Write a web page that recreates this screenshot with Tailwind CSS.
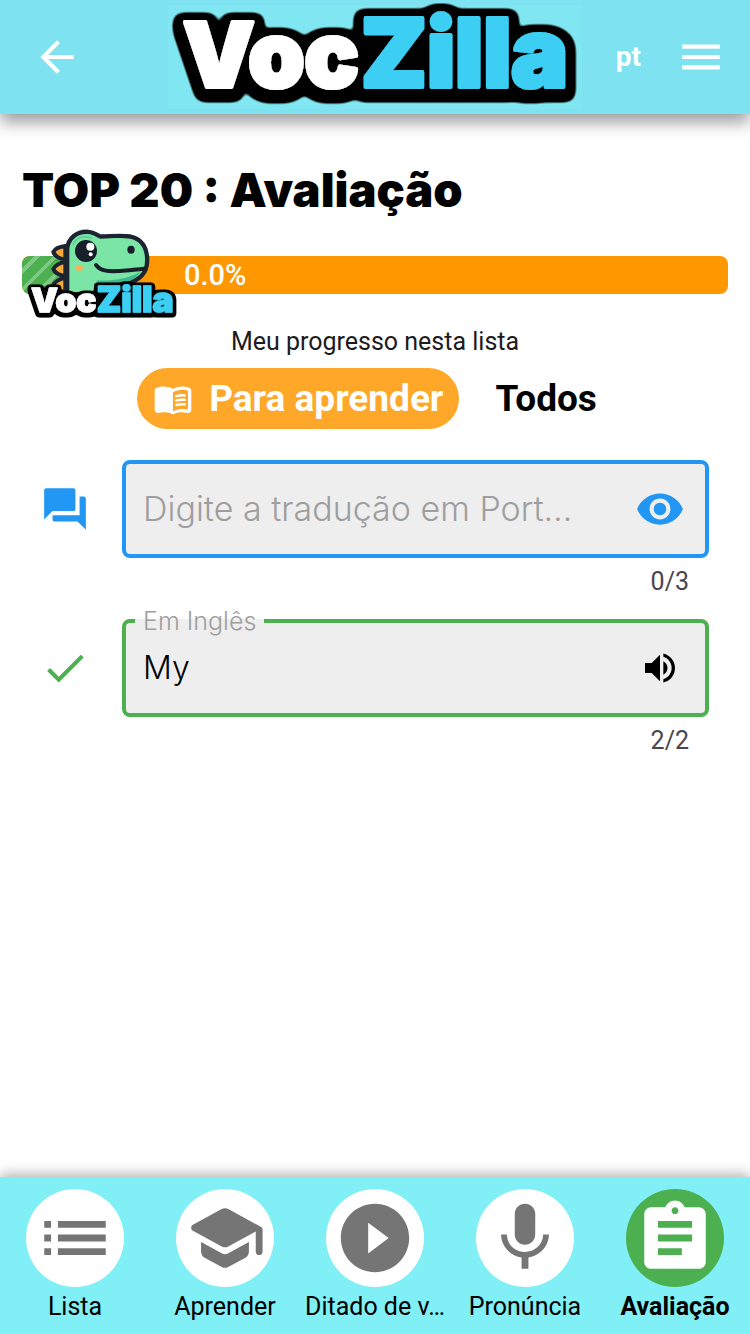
<!DOCTYPE html>
<html lang="pt">
<head>
<meta charset="utf-8">
<meta name="viewport" content="width=device-width, initial-scale=1">
<title>VocZilla</title>
<script src="https://cdn.jsdelivr.net/npm/@tailwindcss/browser@4"></script>
</head>
<body class="flex min-h-screen flex-col bg-white font-['Roboto',sans-serif] text-black">

<header class="relative grid h-[114px] grid-cols-[1fr_414px_1fr] items-center bg-[#7ee2f0] shadow-[0_8px_16px_rgba(0,0,0,0.4)]">
  <button type="button" aria-label="Voltar" class="flex w-[114px] justify-center text-white">
    <svg class="size-[50px]" viewBox="0 0 24 24" fill="currentColor"><path d="M20 11H7.830l5.590-5.590L12 4l-8 8 8 8 1.410-1.410L7.830 13H20v-2z"/></svg>
  </button>
  <a href="#" aria-label="VocZilla" class="block bg-[#80e6f1]">
    <svg class="block h-[104px] w-full overflow-visible" viewBox="168 5 414 104" font-family="Inter, sans-serif" font-weight="900" stroke-linejoin="round" stroke-width="4">
      <defs>
        <!-- Rounded black outline around the lettering, slightly deeper at the bottom -->
        <filter id="outline" filterUnits="userSpaceOnUse" x="160" y="0" width="430" height="114">
          <feMorphology in="SourceAlpha" operator="dilate" radius="5"/>
          <feGaussianBlur stdDeviation="4"/>
          <feOffset dy="3"/>
          <feComponentTransfer result="edge"><feFuncA type="linear" slope="12" intercept="-0.6"/></feComponentTransfer>
          <feFlood flood-color="#000"/><feComposite in2="edge" operator="in"/>
          <feMerge><feMergeNode/><feMergeNode in="SourceGraphic"/></feMerge>
        </filter>
      </defs>
      <g filter="url(#outline)">
        <text x="183" y="87" font-size="90" fill="#fff" stroke="#fff">Voc</text>
        <text x="361" y="87" font-size="95" fill="#3ccff3" stroke="#3ccff3">Zilla</text>
      </g>
    </svg>
  </a>
  <div class="flex items-center justify-end gap-[35px] pr-6 text-white">
    <button type="button" class="text-[28px] leading-8 font-bold">pt</button>
    <button type="button" aria-label="Menu">
      <svg class="block size-[50px]" viewBox="0 0 24 24" fill="currentColor"><path d="M3 18h18v-2H3v2zm0-5h18v-2H3v2zm0-7v2h18V6H3z"/></svg>
    </button>
  </div>
</header>

<main class="flex grow flex-col px-[22px] pt-12">
  <h1 class="font-['Inter',sans-serif] text-[47px] leading-14 font-black">TOP 20 : Avaliação</h1>

  <div class="relative mt-[38px] flex h-[38px] items-center rounded-lg bg-[#ff9800]" role="progressbar" aria-label="Meu progresso nesta lista" aria-valuenow="0" aria-valuemin="0" aria-valuemax="100">
    <div class="h-full w-[100px] rounded-l-lg bg-[repeating-linear-gradient(135deg,#4caf50_0px,#4caf50_9px,#81c784_9px,#81c784_13px)]"></div>
    <span class="ml-[62px] text-[29px] leading-8 font-medium text-white">0.0%</span>
    <svg class="absolute top-[-28px] left-0 h-[92px] w-[160px] overflow-visible" viewBox="36 24 480 276" stroke-linejoin="round" stroke-linecap="round">
      <defs>
        <filter id="outline-small" filterUnits="userSpaceOnUse" x="30" y="170" width="500" height="140">
          <feMorphology in="SourceAlpha" operator="dilate" radius="6"/>
          <feGaussianBlur stdDeviation="4"/>
          <feOffset dy="4"/>
          <feComponentTransfer result="edge"><feFuncA type="linear" slope="8" intercept="-0.4"/></feComponentTransfer>
          <feFlood flood-color="#000"/><feComposite in2="edge" operator="in"/>
          <feMerge><feMergeNode/><feMergeNode in="SourceGraphic"/></feMerge>
        </filter>
      </defs>
      <g fill="#f9a93a" stroke="#1b2430" stroke-width="12">
        <path d="M166 78C148 80 134 88 130 96C134 108 148 116 166 118Z"/>
        <path d="M166 126C148 128 134 138 130 147C134 158 148 166 166 168Z"/>
        <path d="M166 174C148 176 134 186 130 196C134 206 148 214 166 216Z"/>
      </g>
      <path d="M178 216V88C180 58 204 40 234 42C254 44 260 54 272 56C300 56 330 52 360 56C392 62 406 88 405 122C405 158 382 176 345 186C310 192 280 190 254 190L250 216Z" fill="#7ae5a4" stroke="#1b2430" stroke-width="26" paint-order="stroke"/>
      <path d="M262 181C300 184 350 178 390 156C380 178 350 190 310 190L258 190Z" fill="#3fb88f"/>
      <path d="M190 74C196 52 222 46 244 54" fill="none" stroke="#5fcf96" stroke-width="5"/>
      <circle cx="228" cy="93" r="33" fill="#171f2a"/>
      <circle cx="241" cy="80" r="12" fill="#fff"/><circle cx="242" cy="103" r="6" fill="#fff"/>
      <ellipse cx="208" cy="144" rx="13" ry="8" fill="#f8b25c"/>
      <ellipse cx="363" cy="89" rx="11" ry="12" fill="#171f2a"/>
      <path d="M258 135C274 156 300 154 330 153C356 152 376 148 402 146" fill="none" stroke="#171f2a" stroke-width="12"/>
      <g filter="url(#outline-small)" font-family="Inter, sans-serif" font-weight="900" stroke-width="4">
        <text x="64" y="277" font-size="100" fill="#fff" stroke="#fff">Voc</text>
        <text x="260" y="277" font-size="106" fill="#3ccff3" stroke="#3ccff3">Zilla</text>
      </g>
    </svg>
  </div>

  <p class="mt-8 text-center text-[25px] leading-8 text-[#1d1b20]">Meu progresso nesta lista</p>

  <div class="mt-[10px] flex justify-center gap-5 text-[37px] leading-[61px] font-bold">
    <button type="button" class="flex items-center gap-4 rounded-full bg-[#ffa728] px-4 text-white">
      <svg class="size-[40px]" viewBox="0 0 24 24" fill="currentColor"><path d="M17.500 4.500c-1.950 0-4.050.4-5.500 1.500-1.450-1.100-3.550-1.500-5.500-1.500-1.450 0-2.990.22-4.280.79C1.490 5.620 1 6.330 1 7.140v11.280c0 1.300 1.220 2.260 2.480 1.940.98-.25 2.020-.36 3.020-.36 1.560 0 3.220.26 4.560.92.6.3 1.280.3 1.870 0 1.340-.67 3-.92 4.560-.92 1 0 2.040.11 3.020.36 1.260.33 2.480-.63 2.480-1.940V7.140c0-.81-.49-1.520-1.220-1.850-1.280-.57-2.820-.79-4.270-.79zM21 17.230c0 .63-.58 1.090-1.200.98-.75-.14-1.530-.2-2.300-.2-1.700 0-4.150.65-5.500 1.500V8c1.350-.85 3.800-1.500 5.500-1.500.92 0 1.830.09 2.700.28.46.1.8.51.8.98v9.470z"/><path d="M13.980 11.010c-.32 0-.61-.2-.71-.52-.13-.39.09-.82.48-.94 1.540-.5 3.530-.66 5.360-.45.41.05.71.42.66.83-.05.41-.42.71-.83.66-1.620-.19-3.390-.04-4.730.39-.08.01-.16.03-.23.03zM13.980 13.670c-.32 0-.61-.2-.71-.52-.13-.39.09-.82.48-.94 1.530-.5 3.530-.66 5.360-.45.41.05.71.42.66.83-.05.41-.42.71-.83.66-1.620-.19-3.390-.04-4.730.39-.08.02-.16.03-.23.03zM13.980 16.330c-.32 0-.61-.2-.71-.52-.13-.39.09-.82.48-.94 1.530-.5 3.530-.66 5.360-.45.41.05.71.42.66.83-.05.41-.42.7-.83.66-1.620-.19-3.390-.04-4.730.39-.08.02-.16.03-.23.03z"/></svg>
      Para aprender
    </button>
    <button type="button" class="px-4">Todos</button>
  </div>

  <form class="mt-[31px] grid grid-cols-[86px_minmax(0,1fr)] gap-x-[14px] pr-[19px]">
    <div class="flex h-[98px] items-center justify-center text-[#2196f3]">
      <svg class="size-[50px]" viewBox="0 0 24 24" fill="currentColor"><path d="M21 6h-2v9H6v2c0 .55.45 1 1 1h11l4 4V7c0-.55-.45-1-1-1zm-4 6V3c0-.55-.45-1-1-1H3c-.55 0-1 .45-1 1v14l4-4h10c.55 0 1-.45 1-1z"/></svg>
    </div>
    <div>
      <div class="flex h-[98px] items-center rounded-lg border-4 border-[#2196f3] bg-[#eeeeee] pr-5 pl-[17px]">
        <input type="text" maxlength="3" aria-label="Digite a tradução em Português" placeholder="Digite a tradução em Port…" class="w-full min-w-0 bg-transparent font-['Inter',sans-serif] text-[34px] leading-10 font-light text-ellipsis outline-none placeholder:text-[#9e9e9e]">
        <button type="button" aria-label="Mostrar resposta" class="shrink-0 text-[#2196f3]">
          <svg class="block size-[50px]" viewBox="0 0 24 24" fill="currentColor"><path d="M12 4.500C7 4.500 2.730 7.610 1 12c1.730 4.390 6 7.500 11 7.500s9.270-3.110 11-7.500c-1.730-4.390-6-7.500-11-7.500zM12 17c-2.760 0-5-2.240-5-5s2.240-5 5-5 5 2.240 5 5-2.240 5-5 5zm0-8c-1.660 0-3 1.340-3 3s1.340 3 3 3 3-1.340 3-3-1.340-3-3-3z"/></svg>
        </button>
      </div>
      <p class="mt-2 pr-5 text-right text-[25px] leading-8 text-[#49454f]">0/3</p>
    </div>

    <div class="mt-[21px] flex h-[98px] items-center justify-center text-[#4caf50]">
      <svg class="size-[50px]" viewBox="0 0 24 24" fill="currentColor"><path d="M9 16.170 4.830 12l-1.420 1.410L9 19 21 7l-1.410-1.410z"/></svg>
    </div>
    <div class="mt-[9px]">
      <fieldset class="min-w-0 rounded-lg border-4 border-[#4caf50] bg-[#eeeeee] pr-5 pl-[9px]">
        <legend class="px-2 font-['Inter',sans-serif] text-[25px] leading-7 font-light text-[#9e9e9e]"><label for="ingles">Em Inglês</label></legend>
        <div class="flex h-[78px] items-center pb-3 pl-2">
          <input id="ingles" type="text" value="My" maxlength="2" readonly class="w-full min-w-0 bg-transparent font-['Inter',sans-serif] text-[32px] leading-10 font-light outline-none">
          <button type="button" aria-label="Ouvir" class="flex w-[50px] shrink-0 justify-center">
            <svg class="block size-[40px]" viewBox="0 0 24 24" fill="currentColor"><path d="M3 9v6h4l5 5V4L7 9H3zm13.500 3c0-1.770-1.020-3.290-2.500-4.030v8.050c1.480-.73 2.500-2.250 2.500-4.020zM14 3.230v2.060c2.890.86 5 3.540 5 6.710s-2.110 5.850-5 6.710v2.060c4.010-.91 7-4.490 7-8.770s-2.990-7.860-7-8.770z"/></svg>
          </button>
        </div>
      </fieldset>
      <p class="mt-2 pr-5 text-right text-[25px] leading-8 text-[#49454f]">2/2</p>
    </div>
  </form>
</main>

<nav class="relative grid h-[157px] grid-cols-5 bg-[#80eff6] pt-3 text-center text-[25px] leading-10 shadow-[0_-3px_12px_rgba(0,0,0,0.3)]">
  <a href="#" class="flex flex-col items-center">
    <span class="grid size-[98px] place-items-center rounded-full bg-white text-[#757575]"><svg class="size-[82px]" viewBox="0 0 24 24" fill="currentColor"><path d="M3 13h2v-2H3v2zm0 4h2v-2H3v2zm0-8h2V7H3v2zm4 4h14v-2H7v2zm0 4h14v-2H7v2zM7 7v2h14V7H7z"/></svg></span>
    Lista
  </a>
  <a href="#" class="flex flex-col items-center">
    <span class="grid size-[98px] place-items-center rounded-full bg-white text-[#757575]"><svg class="size-[82px]" viewBox="0 0 24 24" fill="currentColor"><path d="M5 13.180v2.810c0 .73.4 1.410 1.040 1.760l5 2.730c.6.330 1.320.330 1.920 0l5-2.730c.64-.350 1.040-1.030 1.040-1.760v-2.810l-6.040 3.300c-.6.330-1.320.330-1.920 0L5 13.180zm6.040-9.660l-8.430 4.600c-.69.380-.69 1.380 0 1.760l8.430 4.600c.6.330 1.320.330 1.920 0L21 10.090V16c0 .55.45 1 1 1s1-.45 1-1V9.590c0-.37-.2-.7-.52-.88l-9.520-5.190c-.6-.320-1.320-.320-1.920 0z"/></svg></span>
    Aprender
  </a>
  <a href="#" class="flex flex-col items-center">
    <span class="grid size-[98px] place-items-center rounded-full bg-white text-[#757575]"><svg class="size-[82px]" viewBox="0 0 24 24" fill="currentColor"><path d="M12 2C6.480 2 2 6.480 2 12s4.480 10 10 10 10-4.480 10-10S17.520 2 12 2zm-2 14.500v-9l6 4.500-6 4.500z"/></svg></span>
    Ditado de v…
  </a>
  <a href="#" class="flex flex-col items-center">
    <span class="grid size-[98px] place-items-center rounded-full bg-white text-[#757575]"><svg class="size-[82px]" viewBox="0 0 24 24" fill="currentColor"><path d="M12 14c1.660 0 2.990-1.340 2.990-3L15 5c0-1.660-1.340-3-3-3S9 3.340 9 5v6c0 1.660 1.340 3 3 3zm5.300-3c0 3-2.540 5.100-5.300 5.100S6.700 14 6.700 11H5c0 3.410 2.720 6.230 6 6.720V21h2v-3.280c3.280-.48 6-3.300 6-6.720h-1.700z"/></svg></span>
    Pronúncia
  </a>
  <a href="#" aria-current="page" class="flex flex-col items-center font-bold">
    <span class="grid size-[98px] place-items-center rounded-full bg-[#4caf50] text-white"><svg class="size-[82px]" viewBox="0 0 24 24" fill="currentColor"><path d="M19 3h-4.180C14.400 1.840 13.300 1 12 1c-1.300 0-2.400.84-2.820 2H5c-1.100 0-2 .9-2 2v14c0 1.100.9 2 2 2h14c1.100 0 2-.9 2-2V5c0-1.100-.9-2-2-2zm-7 0c.55 0 1 .45 1 1s-.45 1-1 1-1-.45-1-1 .45-1 1-1zm2 14H7v-2h7v2zm3-4H7v-2h10v2zm0-4H7V7h10v2z"/></svg></span>
    Avaliação
  </a>
</nav>
</body>
</html>
